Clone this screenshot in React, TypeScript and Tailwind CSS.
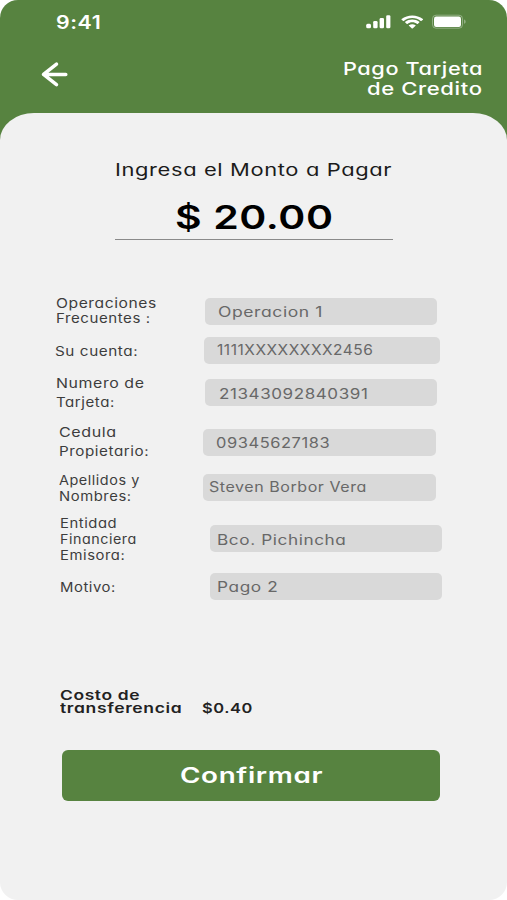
import { useLayoutEffect, useRef, useState } from "react";
import clsx from "clsx";

type LineProps = {
  text: string;
  width: number;
  className?: string;
};

// One line of wide lettering, stretched sideways to fill the given width
const Line: React.FC<LineProps> = ({ text, width, className }) => {
  const ref = useRef<HTMLSpanElement>(null);
  const [scale, setScale] = useState(1);

  useLayoutEffect(() => {
    if (ref.current) setScale(width / ref.current.offsetWidth);
  }, [text, width]);

  return (
    <span className={clsx("block", className)} style={{ width }}>
      <span
        ref={ref}
        className="inline-block origin-left whitespace-nowrap align-top"
        style={{ transform: `scaleX(${scale})` }}
      >
        {text}
      </span>
    </span>
  );
};

type FieldProps = {
  label: [string, number][];
  value: [string, number];
  rowClass: string;
  labelClass: string;
  boxClass: string;
};

const fields: FieldProps[] = [
  {
    label: [["Operaciones", 101], ["Frecuentes :", 95]],
    value: ["Operacion 1", 105],
    rowClass: "h-[41px]",
    labelClass: "pl-[56px] pt-px leading-[15px]",
    boxClass: "ml-[204.5px] mt-[3px] w-[232.5px] pl-[13px]",
  },
  {
    label: [["Su cuenta:", 83.5]],
    value: ["1111XXXXXXXX2456", 156],
    rowClass: "h-[38px]",
    labelClass: "pl-[55px] pt-[7px] leading-4",
    boxClass: "ml-[203.5px] mt-[0.5px] w-[236.5px] pl-[13px] leading-[26px]",
  },
  {
    label: [["Numero de", 88], ["Tarjeta:", 59]],
    value: ["21343092840391", 149.5],
    rowClass: "h-[49px]",
    labelClass: "pl-[56px] leading-[19px]",
    boxClass: "ml-[205px] mt-[5px] w-[232px] pl-[14px] pt-px",
  },
  {
    label: [["Cedula", 58], ["Propietario:", 90]],
    value: ["09345627183", 114],
    rowClass: "h-[50px]",
    labelClass: "pl-[58.5px] leading-[19px]",
    boxClass: "ml-[203px] mt-[6px] w-[233px] pl-[12.5px]",
  },
  {
    label: [["Apellidos y", 81], ["Nombres:", 73]],
    value: ["Steven Borbor Vera", 158],
    rowClass: "h-[42px]",
    labelClass: "-mt-px pl-[59px] leading-4",
    boxClass: "ml-[203px] mt-px w-[233px] pl-[6px] leading-[25px]",
  },
  {
    label: [["Entidad", 57], ["Financiera", 77], ["Emisora:", 65]],
    value: ["Bco. Pichincha", 129],
    rowClass: "h-[58px]",
    labelClass: "pl-[60px] leading-4",
    boxClass: "ml-[210px] mt-[10px] w-[232px] pl-[7px] pt-px",
  },
  {
    label: [["Motivo:", 56]],
    value: ["Pago 2", 61.5],
    rowClass: "h-[27px]",
    labelClass: "pl-[60px] pt-[6px] leading-4",
    boxClass: "ml-[210px] w-[232px] pl-[7px]",
  },
];

const Field: React.FC<FieldProps> = (props) => {
  return (
    <div className={clsx("grid items-start", props.rowClass)}>
      <div
        className={clsx(
          "col-start-1 row-start-1 text-[13px] text-[#3d3d3d]",
          props.labelClass,
        )}
      >
        {props.label.map(([text, width]) => (
          <Line key={text} text={text} width={width} />
        ))}
      </div>
      <div
        className={clsx(
          "col-start-1 row-start-1 h-[27px] rounded-[5px] bg-[#d9d9d9] text-[14px] text-[#686868]",
          !props.boxClass.includes("leading") && "leading-[27px]",
          props.boxClass,
        )}
      >
        <Line text={props.value[0]} width={props.value[1]} />
      </div>
    </div>
  );
};

const StatusBar = () => {
  return (
    <div className="flex h-[44px] items-start justify-between pl-[56px] pr-[40px] pt-[11px] text-white">
      <Line
        text="9:41"
        width={45}
        className="text-[18.5px] font-semibold leading-[22px]"
      />
      <svg
        className="mt-[2px]"
        width="102"
        height="18"
        viewBox="0 0 102 18"
        fill="currentColor"
      >
        <rect x="1.2" y="10.7" width="4.8" height="4.5" rx="1.5" />
        <rect x="8.2" y="8" width="4.4" height="7.2" rx="1.3" />
        <rect x="14.6" y="5" width="4.4" height="10.2" rx="1.3" />
        <rect x="21.2" y="2.2" width="4.2" height="13" rx="1.3" />
        <g transform="translate(-4 0) scale(1.1 1.04)">
          <path d="M46.6 4.8c3 0 5.7 1.1 7.7 3 .2.1.4.1.5 0l1.5-1.4c.2-.2.2-.4 0-.6-5.4-4.6-14-4.6-19.4 0-.2.2-.2.4 0 .6l1.5 1.4c.1.1.3.1.5 0 2-1.9 4.7-3 7.7-3zm0 4.1c1.600 0 3.200.6 4.400 1.600.2.1.4.1.5 0l1.500-1.400c.2-.2.2-.4 0-.6-3.600-3-9.200-3-12.800 0-.2.2-.2.4 0 .6l1.500 1.400c.1.1.3.1.5 0 1.200-1 2.800-1.600 4.400-1.600zm3 3.400c.2-.2.2-.4 0-.5-1.700-1.300-4.300-1.300-6 0-.2.1-.2.3 0 .5l2.700 2.500c.2.2.4.2.6 0z" />
        </g>
        <rect
          x="67.500"
          y="2.200"
          width="30"
          height="13"
          rx="3.500"
          fill="none"
          stroke="currentColor"
          strokeOpacity="0.35"
        />
        <rect x="69" y="3.500" width="27" height="10.500" rx="2.200" />
        <path
          d="M99 6.600v4.200c1-.4 1.700-1.200 1.700-2.100s-.7-1.700-1.700-2.100z"
          opacity="0.35"
        />
      </svg>
    </div>
  );
};

export default function App() {
  return (
    <div className="h-[900px] w-[507px] bg-white font-[Inter,sans-serif] tracking-[0.03em] [font-feature-settings:'cv11']">
      <div className="flex h-full flex-col rounded-t-[18px] rounded-b-[30px] bg-[#578340]">
        <StatusBar />
        <header className="flex h-[69px] items-start justify-between pl-[41px] pr-[24px] pt-[15px] text-white">
          <button className="mt-[2px]" aria-label="Volver">
            <svg
              width="28"
              height="27"
              viewBox="0 0 28 27"
              fill="none"
              stroke="currentColor"
              strokeWidth="3.5"
              strokeLinecap="round"
              strokeLinejoin="round"
            >
              <path d="M24.800 13.400H2.500M15.500 3.200 2.500 13.400l13 10.200" />
            </svg>
          </button>
          <h1 className="flex flex-col items-end text-[17.5px] font-medium leading-5">
            <Line text="Pago Tarjeta" width={140} />
            <Line text="de Credito" width={116} />
          </h1>
        </header>

        <main className="flex-1 rounded-t-[34px_27px] rounded-b-[18px] bg-[#f1f1f1] pt-[45px]">
          <h2 className="pl-[115px] text-[17px] leading-6 text-[#1b1b1b]">
            <Line text="Ingresa el Monto a Pagar" width={277} />
          </h2>
          <div className="ml-[115px] flex h-[58px] w-[278px] justify-center border-b border-[#8a8a8a] pt-[15px] text-[33px] font-semibold leading-10 text-black">
            <Line text="$ 20.00" width={159} />
          </div>

          <div className="mt-[55px]">
            {fields.map((field) => (
              <Field key={field.value[0]} {...field} />
            ))}
          </div>

          <div className="mt-[89px] flex items-end gap-[20px] pl-[60px] text-[13.5px] font-semibold leading-[13px] text-[#222]">
            <div>
              <Line text="Costo de" width={80} />
              <Line text="transferencia" width={122} />
            </div>
            <Line text="$0.40" width={51} />
          </div>

          <button className="ml-[62px] mt-[35px] flex h-[51px] w-[378px] items-center justify-center rounded-[6px] bg-[#578340] text-[21px] font-semibold text-white">
            <Line text="Confirmar" width={143} className="text-left" />
          </button>
        </main>
      </div>
    </div>
  );
}
